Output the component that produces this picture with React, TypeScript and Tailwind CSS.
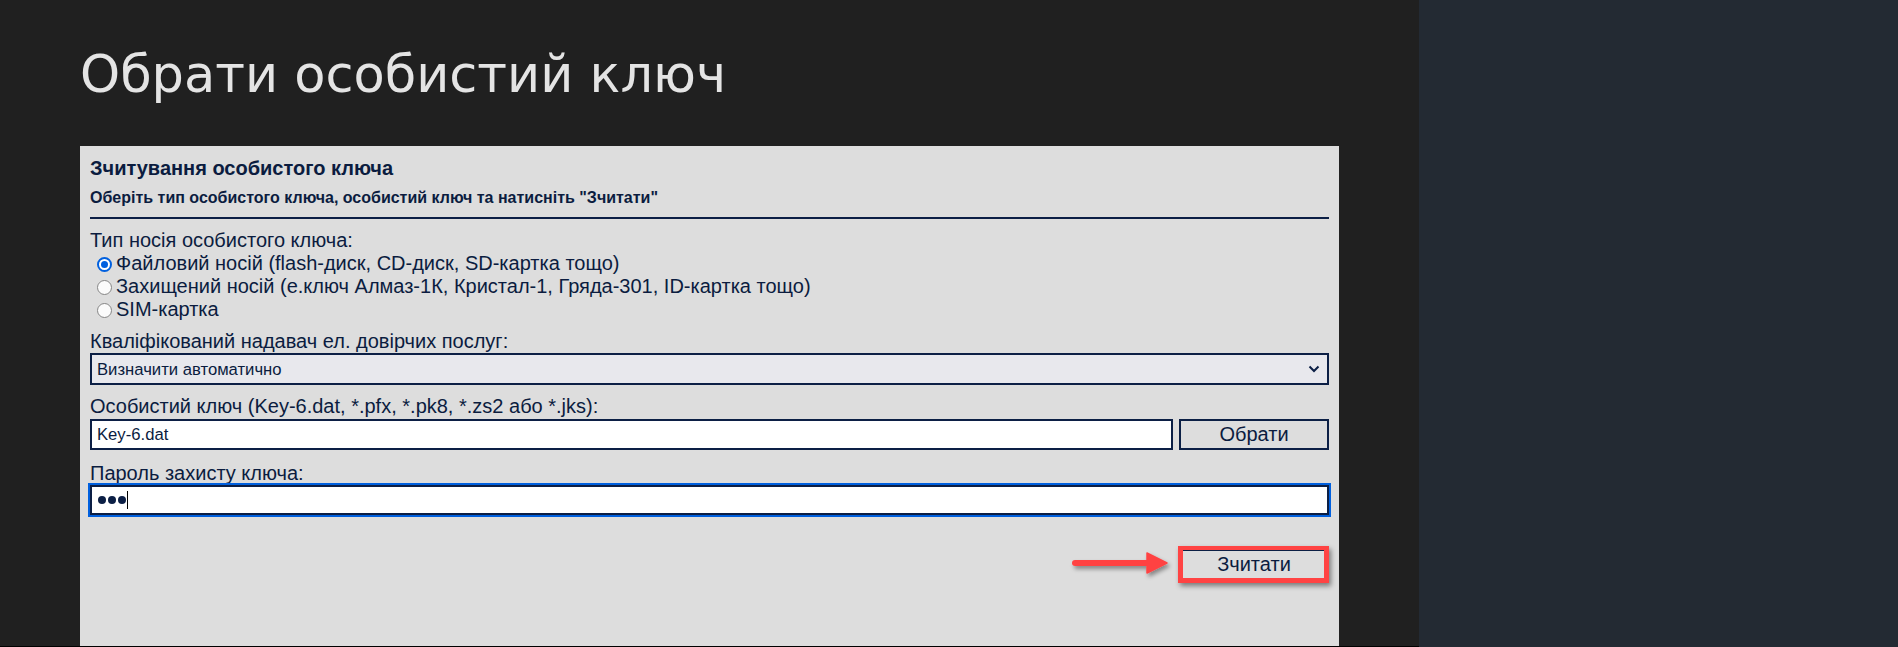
import React from "react";

function Radio({ checked }: { checked?: boolean }) {
  if (checked) {
    return (
      <span className="flex h-[15px] w-[15px] shrink-0 items-center justify-center rounded-full border-2 border-[#0060df] bg-white">
        <span className="block h-[7px] w-[7px] rounded-full bg-[#0060df]" />
      </span>
    );
  }
  return <span className="block h-[15px] w-[15px] shrink-0 rounded-full border border-[#858585] bg-[#fbfbfb]" />;
}

function RadioRow({ checked, children }: { checked?: boolean; children: React.ReactNode }) {
  return (
    <div className="flex h-[23px] items-center gap-[4px] pl-[7px]">
      <span className="flex translate-y-[1px]">
        <Radio checked={checked} />
      </span>
      <span className="whitespace-nowrap text-[20px] leading-[23px]">{children}</span>
    </div>
  );
}

export default function App() {
  return (
    <div className="flex h-[647px] w-[1898px] overflow-hidden font-['Liberation_Sans',Arial,sans-serif]">
      <div className="flex w-[1419px] shrink-0 flex-col border-b border-black bg-[#202020] px-[80px]">
        <h1 className="mt-[49px] mb-[46px] whitespace-nowrap font-['DejaVu_Sans',sans-serif] text-[51px] font-normal leading-[51px] text-[#e4e4e4]">
          Обрати особистий ключ
        </h1>

        <div className="flex-1 bg-[#dddddd] px-[10px] pt-[10px] text-[#0b1c3f]">
          <div className="text-[20px] font-bold leading-[24px]">Зчитування особистого ключа</div>
          <div className="mt-[8px] text-[16px] font-bold leading-[20px]">
            Оберіть тип особистого ключа, особистий ключ та натисніть "Зчитати"
          </div>
          <div className="mt-[9px] h-[2px] bg-[#0c1f45]" />

          <div className="mt-[10px] text-[20px] leading-[23px]">Тип носія особистого ключа:</div>
          <RadioRow checked>Файловий носій (flash-диск, CD-диск, SD-картка тощо)</RadioRow>
          <RadioRow>Захищений носій (е.ключ Алмаз-1К, Кристал-1, Гряда-301, ID-картка тощо)</RadioRow>
          <RadioRow>SIM-картка</RadioRow>

          <div className="mt-[9px] text-[20px] leading-[23px]">Кваліфікований надавач ел. довірчих послуг:</div>
          <div className="flex h-[32px] items-center justify-between border-2 border-[#0c1f45] bg-[#e8e8ed] pl-[5px] pr-[7px]">
            <span className="pt-[2px] text-[16.67px] leading-[20px]">Визначити автоматично</span>
            <svg width="12" height="8" viewBox="0 0 12 8" fill="none">
              <path d="M1.5 1.5 L6 6 L10.5 1.5" stroke="#0c1f45" strokeWidth="2" />
            </svg>
          </div>

          <div className="mt-[10px] text-[20px] leading-[23px]">
            Особистий ключ (Key-6.dat, *.pfx, *.pk8, *.zs2 або *.jks):
          </div>
          <div className="mt-[1px] flex gap-[6px]">
            <div className="flex h-[31px] flex-1 items-center border-2 border-[#0c1f45] bg-white pl-[5px]">
              <span className="pt-[1px] text-[16.67px] leading-[20px]">Key-6.dat</span>
            </div>
            <div className="flex h-[31px] w-[150px] items-center justify-center border-2 border-[#0c1f45] bg-[#dddddd] text-[20px] leading-[23px]">
              Обрати
            </div>
          </div>

          <div className="mt-[12px] text-[20px] leading-[23px]">Пароль захисту ключа:</div>
          <div className="flex h-[30px] items-center border-2 border-[#0c1f45] bg-white pl-[6px] outline-2 outline-offset-0 outline-[#0060df]">
            <span className="h-[8px] w-[8px] rounded-full bg-[#0c1f45]" />
            <span className="ml-[2px] h-[8px] w-[8px] rounded-full bg-[#0c1f45]" />
            <span className="ml-[2px] h-[8px] w-[8px] rounded-full bg-[#0c1f45]" />
            <span className="ml-[1px] h-[18px] w-[1px] bg-black" />
          </div>

          <div className="mt-[34px] flex justify-end">
            <div className="relative flex h-[31px] w-[150px] items-center justify-center border-2 border-[#0c1f45] bg-[#dddddd] text-[20px] leading-[23px]">
              Зчитати
              <div className="absolute top-[-5px] right-[-2px] bottom-[-5px] left-[-3px] border-[5px] border-t-[4px] border-[#ff4343] shadow-[2px_3px_5px_rgba(0,0,0,0.45)]" />
              <svg
                className="absolute top-[-3px] left-[-112px] overflow-visible"
                width="100"
                height="30"
                viewBox="0 0 100 30"
              >
                <defs>
                  <filter id="sh" x="-20%" y="-50%" width="140%" height="200%">
                    <feDropShadow dx="2" dy="3" stdDeviation="2" floodColor="#000" floodOpacity="0.4" />
                  </filter>
                </defs>
                <g filter="url(#sh)">
                  <line x1="6" y1="15" x2="80" y2="15" stroke="#ff4343" strokeWidth="6" strokeLinecap="round" />
                  <path d="M78 5 L98 15 L78 25 Z" fill="#ff4343" stroke="#ff4343" strokeWidth="1.5" strokeLinejoin="round" />
                </g>
              </svg>
            </div>
          </div>
        </div>
      </div>
      <div className="flex-1 bg-[#232a33]" />
    </div>
  );
}
